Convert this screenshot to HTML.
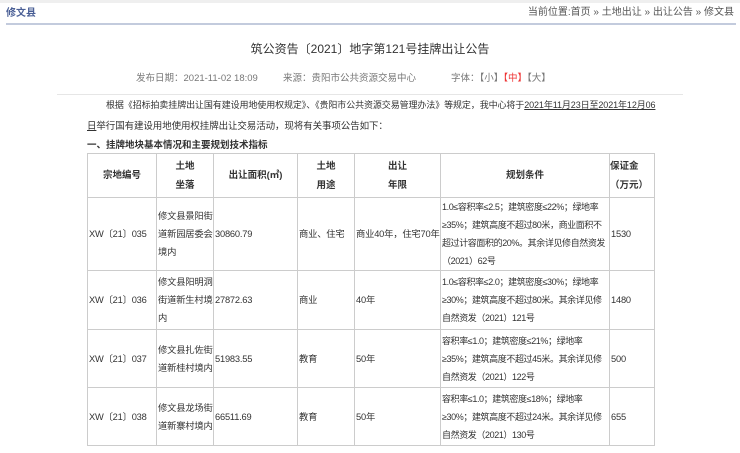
<!DOCTYPE html>
<html><head><meta charset="utf-8"><style>
*{margin:0;padding:0;box-sizing:border-box}
body{width:740px;height:453px;overflow:hidden;background:#fff;font-family:"Liberation Sans","Noto Sans CJK SC",sans-serif;font-size:9.5px;color:#333;position:relative}
.a{position:absolute;white-space:nowrap}
table{position:absolute;left:87px;top:153px;width:567px;border-collapse:collapse;table-layout:fixed}
td{border:1.5px solid #ccc;font-size:9.3px;line-height:18px;padding:0 0 0 1px;vertical-align:middle;color:#333;letter-spacing:-0.2px;overflow:hidden;white-space:nowrap}
td.c{font-size:9px;letter-spacing:-0.4px}
th{border:1.5px solid #ccc;font-size:9.5px;font-weight:bold;line-height:19px;color:#333}
</style></head><body>
<div class="a" style="left:0;top:0;width:740px;height:3px;background:#efefef"></div>
<div class="a" style="left:6px;top:4px;font-size:10px;font-weight:bold;color:#4a5f96">修文县</div>
<div class="a" style="right:6px;top:3px;font-size:10px;color:#555">当前位置:首页 » 土地出让 » 出让公告 » 修文县</div>
<div class="a" style="left:6px;top:23px;width:730px;height:2px;background:#c3cbdd"></div>
<div class="a" style="left:0;width:740px;text-align:center;top:40px;font-size:12px;color:#333">筑公资告〔2021〕地字第121号挂牌出让公告</div>
<div class="a" style="left:136px;top:70px;color:#777">发布日期：2021-11-02 18:09</div>
<div class="a" style="left:283px;top:70px;color:#777">来源：贵阳市公共资源交易中心</div>
<div class="a" style="left:451px;top:70px;color:#777">字体：【小】<span style="color:#e33">【中】</span>【大】</div>
<div class="a" style="left:57px;top:94px;width:626px;height:1px;background:#e6e6e6"></div>
<div class="a" style="left:106px;top:98px;font-size:9px;letter-spacing:-0.1px">根据《招标拍卖挂牌出让国有建设用地使用权规定》、《贵阳市公共资源交易管理办法》等规定，我中心将于<u>2021年11月23日至2021年12月06</u></div>
<div class="a" style="left:87px;top:118px;letter-spacing:-0.1px"><u>日</u>举行国有建设用地使用权挂牌出让交易活动，现将有关事项公告如下：</div>
<div class="a" style="left:87px;top:137px;font-weight:bold">一、挂牌地块基本情况和主要规划技术指标</div>
<table>
<colgroup><col style="width:69px"><col style="width:57px"><col style="width:84px"><col style="width:57px"><col style="width:86px"><col style="width:169px"><col style="width:45px"></colgroup>
<tr style="height:44px"><th>宗地编号</th><th>土地<br>坐落</th><th>出让面积(㎡)</th><th>土地<br>用途</th><th>出让<br>年限</th><th>规划条件</th><th style="text-align:left">保证金<br>（万元）</th></tr>
<tr style="height:71px"><td>XW〔21〕035</td><td>修文县景阳街<br>道新园居委会<br>境内</td><td>30860.79</td><td>商业、住宅</td><td>商业40年，住宅70年</td><td class="c">1.0≤容积率≤2.5；建筑密度≤22%；绿地率<br>≥35%；建筑高度不超过80米，商业面积不<br>超过计容面积的20%。其余详见修自然资发<br>（2021）62号</td><td>1530</td></tr>
<tr style="height:59px"><td>XW〔21〕036</td><td>修文县阳明洞<br>街道新生村境<br>内</td><td>27872.63</td><td>商业</td><td>40年</td><td class="c">1.0≤容积率≤2.0；建筑密度≤30%；绿地率<br>≥30%；建筑高度不超过80米。其余详见修<br>自然资发（2021）121号</td><td>1480</td></tr>
<tr style="height:58px"><td>XW〔21〕037</td><td>修文县扎佐街<br>道新桂村境内</td><td>51983.55</td><td>教育</td><td>50年</td><td class="c">容积率≤1.0；建筑密度≤21%；绿地率<br>≥35%；建筑高度不超过45米。其余详见修<br>自然资发（2021）122号</td><td>500</td></tr>
<tr style="height:58px"><td>XW〔21〕038</td><td>修文县龙场街<br>道新寨村境内</td><td>66511.69</td><td>教育</td><td>50年</td><td class="c">容积率≤1.0；建筑密度≤18%；绿地率<br>≥30%；建筑高度不超过24米。其余详见修<br>自然资发（2021）130号</td><td>655</td></tr>
</table>
</body></html>
